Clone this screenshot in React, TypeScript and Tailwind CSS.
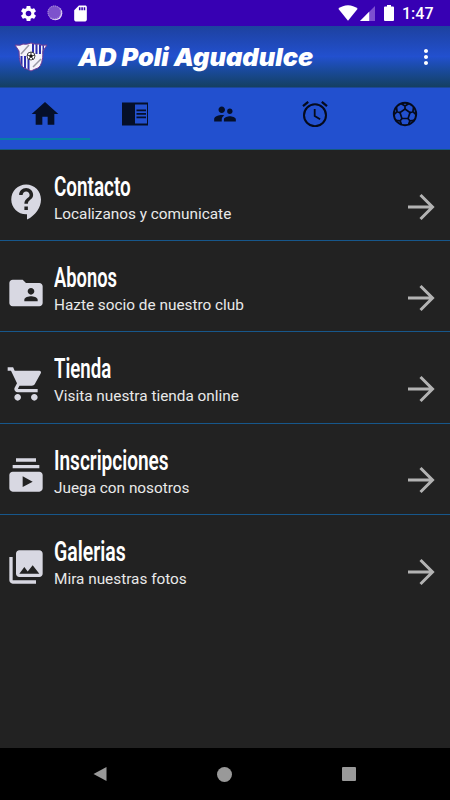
import React from 'react';
import {
  MdSettings,
  MdSdCard,
  MdMoreVert,
  MdHome,
  MdSupervisorAccount,
  MdContactSupport,
  MdFolderShared,
  MdShoppingCart,
  MdSubscriptions,
  MdPhotoLibrary,
} from 'react-icons/md';

function StatusBar() {
  return (
    <div className="h-[26px] shrink-0 bg-[#3700b3] flex items-center text-white">
      <MdSettings className="ml-[19px] w-[19px] h-[19px]" />
      <svg className="ml-[9px] w-4 h-4" viewBox="0 0 16 16">
        <circle cx="8.3" cy="8.3" r="7" fill="#e2d6f5" />
        <circle cx="7.4" cy="7.4" r="6.8" fill="#7d52cc" />
        <circle cx="7.4" cy="7.4" r="6.4" fill="none" stroke="#b59be2" strokeWidth="1" strokeDasharray="1 1" />
      </svg>
      <MdSdCard className="ml-[8px] w-[19px] h-[19px]" />
      <svg className="ml-auto w-5 h-4" viewBox="0 0 20 16">
        <path d="M.3 3.8C5.8-1 14.2-1 19.7 3.8L10 15.8z" fill="#fff" />
      </svg>
      <svg className="ml-[2px] w-[15px] h-4" viewBox="0 0 15 16">
        <path d="M0 16 15 1v15z" fill="#7d4fd0" />
        <path d="M0 16 9.2 6.8V16z" fill="#fff" />
      </svg>
      <svg className="ml-[9px] w-[10px] h-4" viewBox="0 0 10 16">
        <path d="M3 0h4v1.600h2q1 0 1 1V15q0 1-1 1H1q-1 0-1-1V2.600q0-1 1-1h2z" fill="#fff" />
      </svg>
      <span className="ml-[8px] mr-[17px] pt-[2px] w-[31px] text-[16px] leading-none font-medium whitespace-nowrap">1:47</span>
    </div>
  );
}

function Crest() {
  return (
    <svg className="w-[34px] h-[30px]" viewBox="0 0 34 30">
      <clipPath id="shield">
        <path d="M1 3q6 1 8-1 3 1 8-1 5 2 8 1 2 2 8 1l-4 6q0 14-5 17-3 1-7 3-4-2-7-3Q5 23 5 9z" />
      </clipPath>
      <g clipPath="url(#shield)">
        <path d="M0 0h34v30H0z" fill="#f4f4fa" />
        <path d="M18 1h2v11h-2zM21.500 1h2v11h-2zM25 1h2v11h-2zM28.500 1h1.500v11h-1.500z" fill="#2c2fae" />
        <path d="M6.500 14h2v14h-2zM10 14h2v14h-2zM13.500 14h2v15h-2z" fill="#2c2fae" />
        <path d="m7 12 8-9M19 25l8-8" stroke="#9a9aa5" strokeWidth="1.500" />
      </g>
      <path d="M1 3q6 1 8-1 3 1 8-1 5 2 8 1 2 2 8 1l-4 6q0 14-5 17-3 1-7 3-4-2-7-3Q5 23 5 9z" fill="none" stroke="#6e3b96" strokeWidth="1" />
      <circle cx="17" cy="14" r="4" fill="#fff" stroke="#222" strokeWidth=".8" />
      <path d="m17 12 2 1.500-.8 2.300h-2.400L15 13.500z" fill="#111" />
      <path d="M17 10v2M13 13l2 .5M21 13l-2 .5M15 17.500l.8-1.700M19 17.500l-.8-1.700" stroke="#222" strokeWidth=".9" />
    </svg>
  );
}

function Header() {
  return (
    <header className="h-[61px] shrink-0 flex items-center text-white bg-linear-to-b from-[#1d419f] via-[#2250cf] to-[#153f62]">
      <div className="ml-[14px] w-[34px]">
        <Crest />
      </div>
      <h1 className="ml-[30px] w-[237px] pt-[1px] text-[25px] leading-none font-black italic whitespace-nowrap font-[Inter,sans-serif]">
        <span className="inline-block origin-left scale-x-[1.015]">AD Poli Aguadulce</span>
      </h1>
      <MdMoreVert className="ml-auto mr-[12px] w-6 h-6" />
    </header>
  );
}

function ReaderIcon() {
  return (
    <svg className="w-[26px] h-[24px]" viewBox="0 0 26 24" fill="#050f29">
      <path fillRule="evenodd" d="M0 .5h26v23H0zM13 2.500v19h12v-19z" />
      <path d="M14.500 7.500h9.500v1.700h-9.500zM14.500 11h9.500v1.700h-9.500zM14.500 14.500h9.500v1.700h-9.500z" />
    </svg>
  );
}

function AlarmIcon() {
  return (
    <svg className="w-[26px] h-[26px]" viewBox="0 0 26 26" fill="none" stroke="#050a1c" strokeWidth="2">
      <circle cx="13" cy="14.200" r="11" />
      <path d="M1 5.200 6.200.8M25 5.200 19.800.8" strokeWidth="2.200" />
      <path d="M12.700 8v7l5.400 3.200" strokeWidth="1.800" />
    </svg>
  );
}

function SoccerIcon() {
  return (
    <svg className="w-[26px] h-[26px]" viewBox="0 0 26 26" fill="none" stroke="#050a1c" strokeWidth="1.700">
      <circle cx="13" cy="13" r="11.200" strokeWidth="1.900" />
      <path d="m13 8 5 3.600-1.900 5.900H9.900L8 11.600z" />
      <path d="M13 8V5L9 2.600M13 5l4-2.400M8 11.600l-2.900-1L2 13.600M5.100 10.600 4.400 6.200M18 11.600l2.900-1 3.100 3M20.900 10.600l.7-4.400M9.900 17.500l-1.800 2.400-4.700-.6M8.100 19.900l1.500 4M16.100 17.500l1.800 2.400 4.700-.6M17.900 19.900l-1.500 4" />
    </svg>
  );
}

const tabs = [
  { id: 'home', icon: <MdHome className="w-[32px] h-[32px]" /> },
  { id: 'news', icon: <ReaderIcon /> },
  { id: 'team', icon: <MdSupervisorAccount className="w-[26px] h-[26px]" /> },
  { id: 'alarm', icon: <AlarmIcon /> },
  { id: 'soccer', icon: <SoccerIcon /> },
];

function Tabs() {
  return (
    <nav className="h-[63px] shrink-0 bg-[#2250cf] border-t border-[#1c4797] border-b border-b-[#15597f] flex">
      {tabs.map((tab, index) => (
        <div key={tab.id} className="w-[90px] h-[52px] flex flex-col text-[#050f29]">
          <div className="h-[50px] pt-[1px] flex items-center justify-center">{tab.icon}</div>
          {index === 0 && <div className="h-[2px] bg-[#087da5]" />}
        </div>
      ))}
    </nav>
  );
}

const items = [
  {
    title: 'Contacto',
    desc: 'Localizanos y comunicate',
    scale: 'scale-x-[0.7]',
    icon: <MdContactSupport className="ml-[2px] w-[42px] h-[42px]" />,
  },
  {
    title: 'Abonos',
    desc: 'Hazte socio de nuestro club',
    scale: 'scale-x-[0.68]',
    icon: <MdFolderShared className="w-10 h-10" />,
  },
  {
    title: 'Tienda',
    desc: 'Visita nuestra tienda online',
    scale: 'scale-x-[0.69]',
    icon: <MdShoppingCart className="w-10 h-10" />,
  },
  {
    title: 'Inscripciones',
    desc: 'Juega con nosotros',
    scale: 'scale-x-[0.705]',
    icon: <MdSubscriptions className="w-10 h-10" />,
  },
  {
    title: 'Galerias',
    desc: 'Mira nuestras fotos',
    scale: 'scale-x-[0.72]',
    icon: <MdPhotoLibrary className="w-10 h-10" />,
  },
];

export default function App() {
  return (
    <div className="w-full h-[800px] flex flex-col bg-[#222222] overflow-hidden font-[Roboto,sans-serif]">
      <StatusBar />
      <Header />
      <Tabs />
      <main className="flex-1">
        {items.map((item, index) => (
          <div
            key={item.title}
            className={
              index < items.length - 1
                ? 'h-[91.2px] flex border-b-[1.5px] border-[#17578b]'
                : 'h-[91.2px] flex'
            }
          >
            <div className="w-[53px] pt-[13px] pr-[0.4px] flex items-center justify-center text-[#d8d8e2]">{item.icon}</div>
            <div className="flex-1 pl-[1px] pt-[21px]">
              <h2 className="h-[33px] text-[27px] leading-[33px] font-semibold text-white whitespace-nowrap">
                <span className={`inline-block origin-left ${item.scale}`}>{item.title}</span>
              </h2>
              <p className="text-[15.35px] leading-5 text-[#e9e9e9] whitespace-nowrap">{item.desc}</p>
            </div>
            <div className="mr-[15px] pt-[23px] flex items-center">
              <svg className="w-[28px] h-[28px]" viewBox="0 0 28 28" fill="none" stroke="#b3b3b3" strokeWidth="3">
                <path d="M1 14h24M13.500 2 25.500 14l-12 12" />
              </svg>
            </div>
          </div>
        ))}
      </main>
      <footer className="h-[52px] shrink-0 bg-black flex items-center justify-between pl-[93px] pr-[94px] text-[#999999]">
        <svg className="w-[14px] h-[16px]" viewBox="0 0 14 16" fill="currentColor">
          <path d="M13.500 1v14L.5 8z" />
        </svg>
        <div className="w-[15px] h-[15px] rounded-full bg-[#999999]" />
        <div className="w-[14px] h-[14px] rounded-[1px] bg-[#999999]" />
      </footer>
    </div>
  );
}
